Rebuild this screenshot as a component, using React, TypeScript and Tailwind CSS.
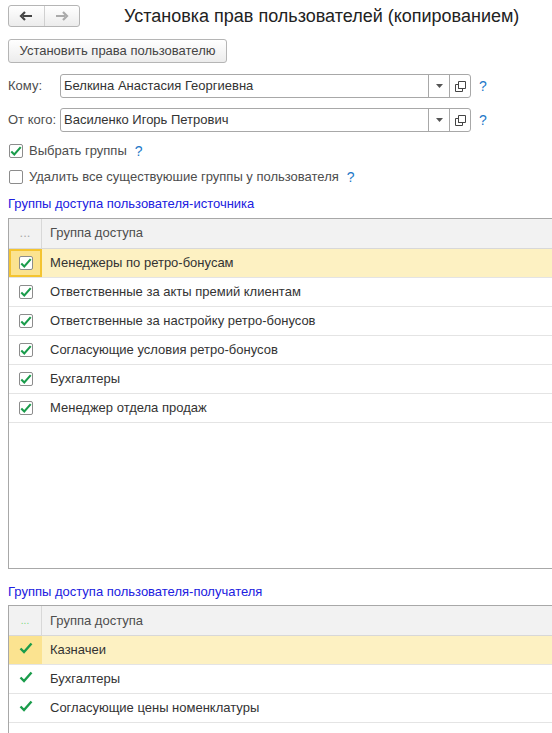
import React from "react";

const Check = ({ color = "#1a9c4b" }: { color?: string }) => (
  <svg width="14" height="12" viewBox="0 0 14 12">
    <path d="M1.5 6.5 L5 10 L12.5 1.5" fill="none" stroke={color} strokeWidth="2.4" />
  </svg>
);

const Box = ({ checked, hl }: { checked: boolean; hl?: boolean }) => (
  <div className={`w-[14px] h-[14px] border ${hl ? "border-[#888]" : "border-[#8c8c8c]"} bg-white rounded-[2px] flex items-center justify-center`}>
    {checked && <Check />}
  </div>
);

const Q = () => <span className="text-[#1e78c8] text-[14px] ml-[8px]">?</span>;

const Field = ({ label, value }: { label: string; value: string }) => (
  <div className="flex items-center h-[24px]">
    <span className="w-[52px] text-[#4d4d4d]">{label}</span>
    <div className="flex w-[411px] h-[24px] border border-[#a8a8a8] rounded-[3px] bg-white">
      <div className="flex-1 px-[3px] flex items-center text-[#333]">{value}</div>
      <div className="w-[21px] border-l border-[#a8a8a8] flex items-center justify-center">
        <svg width="7" height="4"><path d="M0 0 L7 0 L3.5 4Z" fill="#555" /></svg>
      </div>
      <div className="w-[21px] border-l border-[#a8a8a8] flex items-center justify-center">
        <svg width="11" height="11" viewBox="0 0 11 11">
          <path d="M0.5 3.5 H3.5 V7.5 H7.5 V10.5 H0.5Z M3.5 0.5 H10.5 V7.5 H3.5Z" fill="none" stroke="#444" />
        </svg>
      </div>
    </div>
    <Q />
  </div>
);

const rows1 = [
  "Менеджеры по ретро-бонусам",
  "Ответственные за акты премий клиентам",
  "Ответственные за настройку ретро-бонусов",
  "Согласующие условия ретро-бонусов",
  "Бухгалтеры",
  "Менеджер отдела продаж",
];
const rows2 = ["Казначеи", "Бухгалтеры", "Согласующие цены номенклатуры"];

export default function App() {
  return (
    <div className="w-[552px] h-[733px] overflow-hidden bg-white text-[13px] text-[#333]" style={{ fontFamily: '"Liberation Sans", Arial, sans-serif' }}>
      <div className="flex items-center pt-[5px] pl-[8px] h-[27px]">
        <div className="flex w-[72px] h-[22px] border border-[#b5b5b5] rounded-[3px] bg-gradient-to-b from-white to-[#ececec]">
          <div className="flex-1 flex items-center justify-center border-r border-[#d0d0d0]">
            <svg width="14" height="10" viewBox="0 0 14 10"><path d="M13 5 H4 M6 1 L2 5 L6 9" fill="none" stroke="#444" strokeWidth="2.2" /></svg>
          </div>
          <div className="flex-1 flex items-center justify-center">
            <svg width="14" height="10" viewBox="0 0 14 10"><path d="M1 5 H10 M8 1 L12 5 L8 9" fill="none" stroke="#aaa" strokeWidth="2.2" /></svg>
          </div>
        </div>
        <div className="ml-[44px] text-[18px] text-[#222]">Установка прав пользователей (копированием)</div>
      </div>
      <div className="pl-[8px] mt-[12px]">
        <div className="w-[219px] h-[24px] border border-[#b5b5b5] rounded-[3px] bg-gradient-to-b from-white to-[#ececec] flex items-center justify-center text-[#444]">
          Установить права пользователю
        </div>
      </div>
      <div className="pl-[8px] mt-[11px] flex flex-col gap-[10px]">
        <Field label="Кому:" value="Белкина Анастасия Георгиевна" />
        <Field label="От кого:" value="Василенко Игорь Петрович" />
      </div>
      <div className="pl-[9px] mt-[11px] flex items-center h-[16px]">
        <Box checked />
        <span className="ml-[6px] text-[#4d4d4d]">Выбрать группы</span>
        <Q />
      </div>
      <div className="pl-[9px] mt-[10px] flex items-center h-[16px]">
        <Box checked={false} />
        <span className="ml-[6px] text-[#4d4d4d]">Удалить все существуюшие группы у пользователя</span>
        <Q />
      </div>
      <div className="pl-[8px] mt-[9px] text-[#2020e0]">Группы доступа пользователя-источника</div>
      <div className="ml-[8px] mt-[4px] h-[351px] border border-[#a8a8a8] border-r-0">
        <div className="flex h-[30px] bg-[#f2f2f2] border-b border-[#d8d8d8]">
          <div className="w-[33px] border-r border-[#d8d8d8] flex items-center justify-center text-[#aaa]">...</div>
          <div className="pl-[8px] flex items-center text-[#4d4d4d]">Группа доступа</div>
        </div>
        {rows1.map((r, i) => (
          <div key={r} className={`flex h-[29px] border-b border-[#e4e4e4] ${i === 0 ? "bg-[#fdf1c2]" : ""}`}>
            <div className={`w-[33px] flex items-center justify-center ${i === 0 ? "bg-[#fbe390] border-2 border-[#f4c430]" : ""}`}>
              <Box checked />
            </div>
            <div className="pl-[8px] flex items-center text-[#333]">{r}</div>
          </div>
        ))}
      </div>
      <div className="pl-[8px] mt-[13px] text-[#2020e0]">Группы доступа пользователя-получателя</div>
      <div className="ml-[8px] mt-[4px] h-[200px] border border-[#a8a8a8] border-r-0">
        <div className="flex h-[30px] bg-[#f2f2f2] border-b border-[#d8d8d8]">
          <div className="w-[33px] border-r border-[#d8d8d8] flex items-center justify-center text-[#7ed87e] text-[10px]">...</div>
          <div className="pl-[8px] flex items-center text-[#4d4d4d]">Группа доступа</div>
        </div>
        {rows2.map((r, i) => (
          <div key={r} className={`flex h-[29px] border-b border-[#e4e4e4] ${i === 0 ? "bg-[#fdf1c2]" : ""}`}>
            <div className={`w-[33px] flex items-start pt-[6px] justify-center ${i === 0 ? "bg-[#fbe390]" : ""}`}>
              <Check />
            </div>
            <div className="pl-[8px] flex items-center text-[#333]">{r}</div>
          </div>
        ))}
      </div>
    </div>
  );
}
